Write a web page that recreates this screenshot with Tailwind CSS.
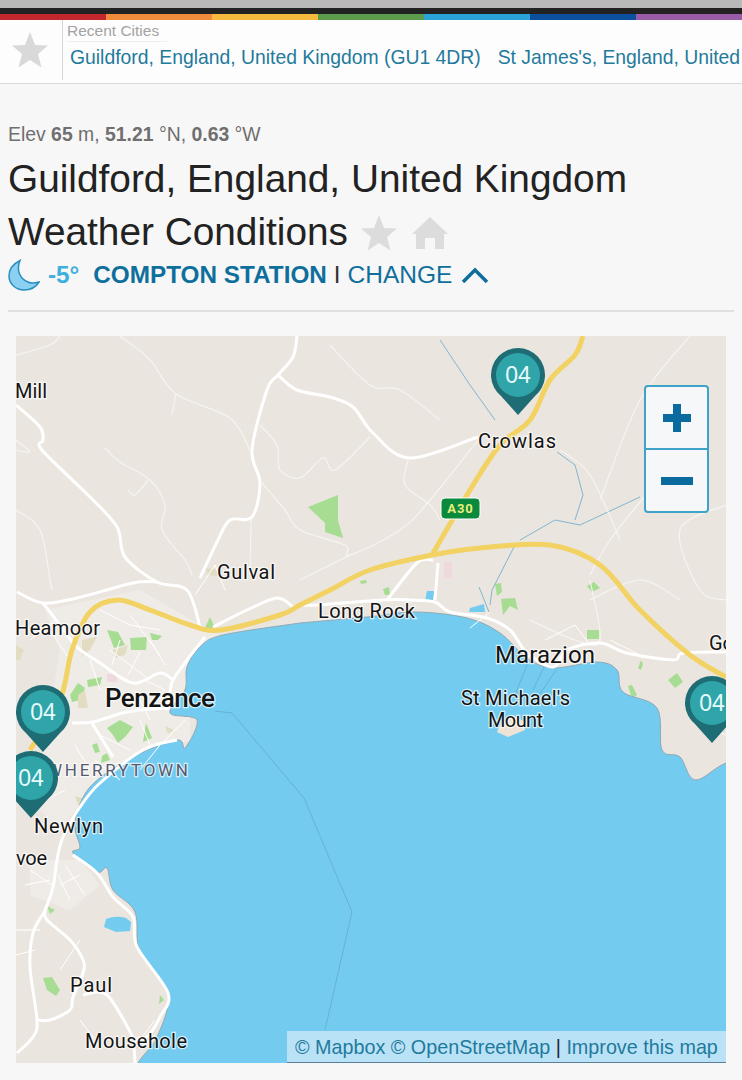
<!DOCTYPE html>
<html lang="en">
<head>
  <meta charset="UTF-8">
  <meta name="viewport" content="width=device-width, initial-scale=1.0">
  <title>Guildford Weather Conditions</title>
  <script src="https://cdn.jsdelivr.net/npm/@tailwindcss/browser@4"></script>
</head>
<body class="bg-[#f7f7f7] font-['Liberation_Sans',sans-serif] overflow-hidden h-[1080px]">
  <!-- top strip -->
  <div class="h-2 bg-[#b9b9b9]"></div>
  <div class="h-1.5 bg-[#222222]"></div>
  <div class="flex h-1.5">
    <div class="w-[106px] bg-[#c1272d]"></div>
    <div class="w-[106px] bg-[#ee8b3c]"></div>
    <div class="w-[106px] bg-[#f5b93e]"></div>
    <div class="w-[106px] bg-[#5c9a4c]"></div>
    <div class="w-[106px] bg-[#29a3d8]"></div>
    <div class="w-[106px] bg-[#0c4f9c]"></div>
    <div class="w-[106px] bg-[#9a5ba8]"></div>
  </div>

  <!-- recent cities -->
  <div class="flex h-[64px] bg-[#fdfdfd] border-b border-[#d9d9d9]">
    <div class="w-[63px] h-[60px] shrink-0 flex items-center justify-center border-r border-[#d5d5d5] pr-[3px]">
      <svg viewBox="0 0 36 36" class="w-9 h-9 fill-[#d9d9d9]"><polygon points="18,0 23,13 36,13.5 26,22 29.5,35.5 18,28 6.5,35.500 10,22 0,13.500 13,13"/></svg>
    </div>
    <div class="min-w-0 pl-1 overflow-hidden">
      <div class="text-[15.500px] leading-[21px] h-[22px] text-[#a3a3a3] border-b border-[#efefef] w-[100px] whitespace-nowrap">Recent Cities</div>
      <div class="flex gap-[17px] pl-[3px] pt-[2px] whitespace-nowrap text-[19.350px] leading-[26px] text-[#1f7a9c]">
        <span>Guildford, England, United Kingdom (GU1 4DR)</span>
        <span>St James's, England, United</span>
      </div>
    </div>
  </div>

  <!-- title block -->
  <div class="mx-2 h-[228px] border-b-2 border-[#e0e0e0]">
    <p class="pt-[39px] text-[19.400px] leading-[22px] text-[#6f6f6f]">Elev <b>65</b> m, <b>51.21</b> °N, <b>0.63</b> °W</p>
    <h1 class="mt-[7px] text-[38.800px] leading-[53px] text-[#222222]">Guildford, England, United Kingdom<br>Weather Conditions
      <svg viewBox="0 0 36 36" class="inline-block w-9 h-9 ml-[2px] -mt-1 fill-[#dcdcdc]"><polygon points="18,0 23,13 36,13.5 26,22 29.5,35.5 18,28 6.5,35.500 10,22 0,13.500 13,13"/></svg>
      <svg viewBox="0 0 36 32" class="inline-block w-9 h-8 ml-1 -mt-1 fill-[#dcdcdc]"><path d="M18 0 36 17h-4v15h-9V21H13v11H4V17H0z"/></svg>
    </h1>
    <div class="flex items-center h-[34px] text-[24.300px] text-[#0f6f9c]">
      <svg viewBox="0 0 32 32" class="w-8 h-8 shrink-0"><path d="M12 1.500C7 4 1 9 1 17c0 8 7 14 15 14 7 0 12-3 15-8-3 1-7 2-11 0C12 20 8 11 12 1.500z" fill="#8bd0f0" stroke="#2b8fbe" stroke-width="1.500"/></svg>
      <span class="ml-2 font-bold text-[#3db0dc]">-5°</span>
      <span class="ml-[14px] font-bold">COMPTON STATION</span>
      <span class="ml-[7px] text-[#333333] text-[24px]">I</span>
      <span class="ml-[7px] text-[24.500px]">CHANGE</span>
      <svg viewBox="0 0 28 16" class="w-7 h-4 ml-[9px]"><path d="M2 15 14 3l12 12" fill="none" stroke="#0f6f9c" stroke-width="3.500"/></svg>
    </div>
  </div>

  <!-- map -->
  <div class="relative mt-6 ml-4 w-[710px] h-[727px] overflow-hidden bg-[#ebe5df]">
    <svg viewBox="16 336 710 727" class="absolute inset-0 w-full h-full font-['Roboto',sans-serif]">
      <!-- built up areas -->
      <g fill="#efece8">
        <path d="M45 610 140 590 200 625 225 640 190 670 190 740 130 760 90 790 60 830 30 800 45 740 60 650z"/>
        <path d="M30 860 80 860 100 885 70 910 30 895z"/>
      </g>
      <!-- green, sand and pink patches -->
      <g fill="#a7dd92">
        <path d="M308 507 338 495 338 520 343 538 325 532 325 523z"/>
        <path d="M107 630 118 632 125 645 114 648z"/>
        <path d="M130 638 147 637 146 650 131 650z"/>
        <path d="M150 633 162 636 158 640 152 640z"/>
        <path d="M70 695 78 683 85 688 80 700 72 702z"/>
        <path d="M87 680 102 677 100 685 88 687z"/>
        <path d="M107 728 120 720 133 727 125 737 118 743 113 735z"/>
        <path d="M146 723 152 738 143 742z"/>
        <path d="M92 745 97 743 100 752 95 753z"/>
        <path d="M102 756 107 753 110 760 101 763z"/>
        <path d="M210 617 215 628 205 628z"/>
        <path d="M333 530 340 530 343 537 337 536z"/>
        <path d="M383 589 389 587 390 595 385 595z"/>
        <path d="M360 581 366 580 367 583 361 584z"/>
        <path d="M495 584 501 583 502 592 497 596z"/>
        <path d="M501 599 515 598 518 610 510 606 503 615z"/>
        <path d="M587 586 594 582 600 588 592 592z"/>
        <path d="M587 630h12v9h-12z"/>
        <path d="M638 668 641 660 643 664 641 670z"/>
        <path d="M668 680 677 673 683 682 675 688z"/>
        <path d="M628 686 632 685 637 695 632 698z"/>
        <path d="M43 978 52 977 60 990 56 996 47 990z"/>
        <path d="M47 906 55 910 50 914z"/>
        <path d="M160 995 164 1000 159 1004z"/>
      </g>
      <g fill="#e2dcc2">
        <path d="M82 640 97 637 90 650 82 656z"/>
        <path d="M113 650 128 645 125 655 115 658z"/>
        <path d="M78 695 85 690 88 708 78 708z"/>
        <path d="M16 645 24 650 20 660 16 660z"/>
        <path d="M75 796 88 800 78 805z"/>
        <path d="M205 568 222 570 218 576 208 575z"/>
        <path d="M165 726 174 730 168 734z"/>
      </g>
      <g fill="#eed9dd">
        <path d="M107 674h10v8h-10z"/>
        <path d="M444 562h8v16h-8z"/>
      </g>

      <!-- sea -->
      <path data-smooth fill="#73ccf0" stroke="#8fa9b5" stroke-width="1" d="M300 623 367 617 415 612 467 618 500 633 527 658 553 668 597 662 617 670 623 692 657 708 662 750 680 757 695 780 726 763 770 750 770 1100 120 1100 138 1063 157 1037 168 993 140 953 135 912 113 890 107 868 97 872 73 853 80 847 75 823 90 787 133 757 177 740 185 748 197 720 170 713 185 690 187 667 200 647 223 635 300 623"/>
      <g fill="#73ccf0">
        <path d="M106 919q10-4 20-1l5 4-1 9-14 1-12-5z"/>
        <path d="M427 591h7l-1 10h-8z"/>
        <path d="M470 608l14-4 1 8h-16z"/>
      </g>
      <g fill="none" stroke="#64a9cc" stroke-width=".8">
        <path d="M215 711 232 713 304 798 352 912 325 1030"/>
        <path d="M527 665 515 695M545 665 533 690M556 670 538 697"/>
        <path d="M479 587 489 612M515 545 492 590 490 605M640 497 580 525 555 520 520 540M557 452 575 465 583 495 575 520"/>
        <path d="M440 340 470 385 495 420"/>
      </g>
      <path d="M500 725 513 715 525 722 525 730 508 737 497 732z" fill="#efe3d5"/>

      <!-- minor roads -->
      <g data-smooth-all fill="none" stroke="#f6f4f1" stroke-width="1.200">
        <path d="M120 336 150 360 176 394 230 418 250 450"/>
        <path d="M176 394 172 415"/>
        <path d="M105 448 120 462 150 480 165 505 162 530 185 560 192 575"/>
        <path d="M148 480 135 495 128 490"/>
        <path d="M260 425 277 445 280 470 300 478 323 458 335 470 370 437"/>
        <path d="M262 483 285 510 300 530 345 545 350 555 400 530 430 500 478 440"/>
        <path d="M350 555 320 570 300 580"/>
        <path d="M408 460 405 485 430 505 440 520"/>
        <path d="M330 345 370 385 400 390 440 420"/>
        <path d="M16 440 30 452 16 450M16 510 40 530 50 580 52 590"/>
        <path d="M16 355 50 345 60 336"/>
        <path d="M251 520 250 575"/>
        <path d="M560 450 590 475 620 540M650 490 610 540 590 575"/>
        <path d="M726 505 680 530 700 590 726 600M690 336 640 400 600 500"/>
        <path d="M590 600 640 580 680 600M530 620 575 640 600 640 590 580"/>
      </g>
      <!-- town streets -->
      <g fill="none" stroke="#ffffff" stroke-width="1">
        <path d="M110 650 150 680M130 615 160 655M100 690 90 660M140 770 160 745 185 720M95 760 120 780M65 790 45 800"/>
        <path d="M120 640 112 665M140 652 128 675M150 640 165 665M100 610 130 625 160 630M50 630 70 660M30 640 55 620"/>
        <path d="M140 700 150 720M165 690 145 680M100 735 130 750M150 745 140 720M75 745 90 770"/>
        <path d="M25 885 50 880M30 870 52 885M58 875 70 900M60 885 80 875M65 865 85 895"/>
        <path d="M195 595 215 565 225 590M470 628 490 612M545 640 575 625 590 645M610 640 640 655M700 725 726 735M700 715 726 715"/>
        <path d="M16 930 40 930M16 955 35 950M80 940 60 970M80 1020 95 1040M140 1040 155 1020"/>
      </g>

      <!-- main roads -->
      <g data-smooth-all fill="none" stroke="#ffffff" stroke-width="3">
        <path d="M16 405 40 427 43 440 42 450 90 497 117 527 125 557 157 582 187 590 200 627"/>
        <path d="M297 336 293 357 278 375 267 390 252 450 260 483 252 517 230 520 218 540 200 578"/>
        <path d="M278 375 297 390 330 397 353 407 373 433 410 458 478 437"/>
        <path d="M157 582 133 583 77 598 43 603 17 592"/>
        <path d="M213 627 247 610 277 598 293 607"/>
        <path d="M43 603 60 625 77 647 100 663 133 683 160 673 173 680"/>
        <path d="M205 637 187 660 173 680 170 693 167 710"/>
        <path d="M72 723 93 722 127 712 167 708"/>
        <path d="M92 723 113 757"/>
        <path d="M177 740 143 750 100 783 80 807 63 837 57 860 53 887 45 910 33 933 30 967 37 1020 33 1037 17 1053"/>
        <path d="M45 910 47 920 70 940 83 960 83 973 73 997 70 1010 50 1020 37 1020"/>
        <path d="M83 995 107 995 133 1037"/>
        <path d="M73 855 97 873 113 897 133 917 137 947 168 993 160 1017 147 1037 135 1040 135 1063"/>
        <path d="M300 605 317 605 383 600 410 600 435 602 450 612 487 618 510 630 527 653 553 667 567 650 600 643 627 653 673 660 683 653 726 652"/>
        <path d="M387 600 417 563 433 560"/>
        <path d="M438 563 435 600"/>
      </g>
      <!-- A30 -->
      <g data-smooth-all fill="none" stroke="#f2d263" stroke-width="5" stroke-linejoin="round">
        <path d="M583 336 575 355 550 380 530 420 500 445 470 490 432 555"/>
        <path d="M726 677 690 655 640 610 600 565 550 545 480 548 432 555 370 570 330 590 300 605 280 615 220 630 190 625 150 610 118 600 90 612 72 650 60 700 30 750"/>
      </g>
      <rect x="441" y="498" width="39" height="21" rx="4" fill="#0b8a3d" stroke="#ffffff"/>
      <text x="460.500" y="513" text-anchor="middle" font-size="13" font-weight="700" fill="#e6ef7a" letter-spacing="1">A30</text>

      <!-- place labels -->
      <g fill="#141414" stroke="#ffffff" stroke-opacity=".7" stroke-width="2.500" class="[paint-order:stroke]" font-size="20">
        <text x="15" y="398" textLength="32">Mill</text>
        <text x="478" y="448" textLength="78">Crowlas</text>
        <text x="217" y="579" textLength="58">Gulval</text>
        <text x="318" y="618" textLength="97">Long Rock</text>
        <text x="15" y="635" textLength="85">Heamoor</text>
        <text x="709" y="650">Go</text>
        <text x="495" y="663" font-size="24" textLength="100">Marazion</text>
        <text x="105" y="707" font-size="26" font-weight="500" textLength="110">Penzance</text>
        <text x="461" y="705" textLength="109">St Michael's</text>
        <text x="488" y="727" textLength="55">Mount</text>
        <text x="47" y="776" font-size="17" fill="#555a70" textLength="141">WHERRYTOWN</text>
        <text x="34" y="833" textLength="69">Newlyn</text>
        <text x="16" y="865" textLength="31">voe</text>
        <text x="70" y="992" textLength="42">Paul</text>
        <text x="85" y="1048" textLength="102">Mousehole</text>
      </g>

      <!-- station pins -->
      <g font-family="Liberation Sans, sans-serif" font-size="23" fill="#e6fbfb" text-anchor="middle">
        <g>
          <path d="M518 415 501 396a27 27 0 1 1 34 0z" fill="#1f6d74"/><circle cx="518" cy="375" r="22" fill="#2fa5aa"/>
          <text x="518" y="383">04</text>
        </g>
        <g>
          <path d="M43 752 26 733a27 27 0 1 1 34 0z" fill="#1f6d74"/><circle cx="43" cy="712" r="22" fill="#2fa5aa"/>
          <text x="43" y="720">04</text>
        </g>
        <g>
          <path d="M31 818 14 799a27 27 0 1 1 34 0z" fill="#1f6d74"/><circle cx="31" cy="778" r="22" fill="#2fa5aa"/>
          <text x="31" y="786">04</text>
        </g>
        <g>
          <path d="M712 743 695 724a27 27 0 1 1 34 0z" fill="#1f6d74"/><circle cx="712" cy="703" r="22" fill="#2fa5aa"/>
          <text x="712" y="711">04</text>
        </g>
      </g>
    </svg>

    <!-- zoom control -->
    <div class="absolute right-[17px] top-[49px] w-[65px] h-[128px] flex flex-col rounded-[4px] border-2 border-[#3fa3c9] bg-[#f5f7f8]">
      <div class="h-[63px] flex items-center justify-center border-b-2 border-[#3fa3c9]">
        <svg viewBox="0 0 28 28" class="w-7 h-7 fill-[#0b6a9e]"><path d="M10 0h8v10h10v8H18v10h-8V18H0v-8h10z"/></svg>
      </div>
      <div class="flex-1 flex items-center justify-center">
        <svg viewBox="0 0 32 8" class="w-8 h-2 fill-[#0b6a9e]"><rect width="32" height="8"/></svg>
      </div>
    </div>

    <!-- attribution -->
    <div class="absolute right-0 bottom-0 w-[439px] h-[32px] pl-2 bg-[#bae2f7] border-b border-[#5b7f99] text-[19.750px] leading-[32px] text-[#1f7a9c] whitespace-nowrap">© Mapbox © OpenStreetMap <span class="text-[#223]">|</span> Improve this map</div>
  </div>

  <script>
    // turn the point lists above into smooth curves
    function smooth(path) {
      const parts = path.getAttribute('d').split('M').filter(Boolean);
      const out = parts.map(part => {
        const n = part.trim().split(/\s+/).map(Number);
        const pts = [];
        for (let i = 0; i < n.length; i += 2) pts.push([n[i], n[i + 1]]);
        let d = 'M' + pts[0][0] + ' ' + pts[0][1];
        for (let i = 0; i < pts.length - 1; i++) {
          const p0 = pts[i - 1] || pts[i], p1 = pts[i], p2 = pts[i + 1], p3 = pts[i + 2] || p2;
          d += 'C' + (p1[0] + (p2[0] - p0[0]) / 6) + ' ' + (p1[1] + (p2[1] - p0[1]) / 6) + ' ' +
            (p2[0] - (p3[0] - p1[0]) / 6) + ' ' + (p2[1] - (p3[1] - p1[1]) / 6) + ' ' + p2[0] + ' ' + p2[1];
        }
        return d;
      });
      path.setAttribute('d', out.join(''));
    }
    document.querySelectorAll('[data-smooth], [data-smooth-all] path').forEach(smooth);
  </script>
</body>
</html>
